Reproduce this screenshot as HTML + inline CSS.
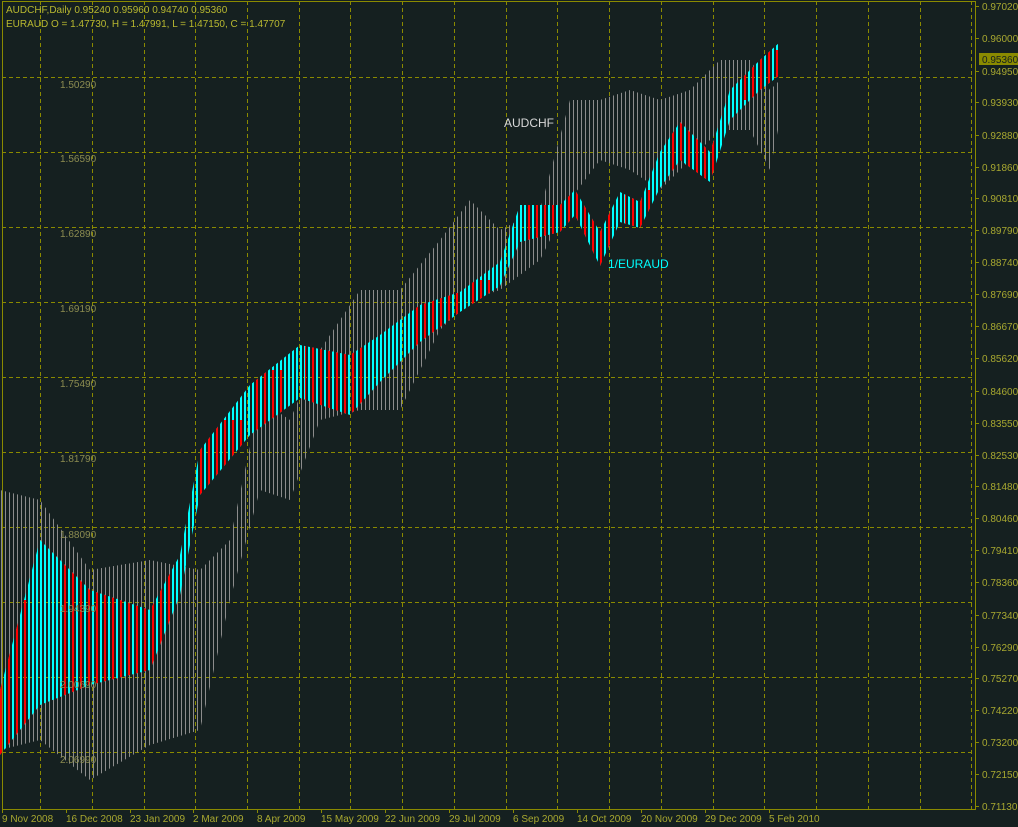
<!DOCTYPE html>
<html><head><meta charset="utf-8"><style>
html,body{margin:0;padding:0;background:#152020;}
svg{display:block;font-family:"Liberation Sans",sans-serif;}
</style></head><body>
<svg width="1018" height="827" viewBox="0 0 1018 827" xmlns="http://www.w3.org/2000/svg">
<defs>
<pattern id="pg" width="4" height="10" patternUnits="userSpaceOnUse"><rect x="1" y="0" width="1" height="10" fill="#8c8c8c"/></pattern>
<pattern id="pc" width="4" height="10" patternUnits="userSpaceOnUse"><rect x="0" y="0" width="2" height="10" fill="#00ffff"/></pattern>
<pattern id="pr" width="8" height="10" patternUnits="userSpaceOnUse"><rect x="0" y="0" width="2" height="10" fill="#ff0000"/></pattern>
<clipPath id="cc"><polygon points="0,690 40,540 90,590 150,610 180,555 200,450 250,385 300,345 350,355 380,335 420,305 460,292 500,262 520,205 560,205 575,190 600,232 620,192 640,202 660,152 680,122 710,152 730,90 760,60 780,42 780,75 760,90 730,120 710,182 680,160 660,188 640,228 620,222 600,266 575,215 560,232 520,242 500,286 460,312 420,342 380,382 350,415 300,398 250,435 200,495 180,595 150,670 90,685 40,705 0,755"/></clipPath>
</defs>
<rect width="1018" height="827" fill="#152020"/>
<g stroke="#8a8a00" stroke-width="1" stroke-dasharray="4,3" fill="none">
<path d="M2 77.5H975M2 152.5H975M2 227.5H975M2 302.5H975M2 377.5H975M2 452.5H975M2 527.5H975M2 602.5H975M2 677.5H975M2 752.5H975"/>
<path d="M40.5 1V809M92.5 1V809M144.5 1V809M195.5 1V809M247.5 1V809M299.5 1V809M350.5 1V809M402.5 1V809M454.5 1V809M506.5 1V809M557.5 1V809M609.5 1V809M661.5 1V809M713.5 1V809M764.5 1V809M816.5 1V809M868.5 1V809M920.5 1V809M971.5 1V809"/>
</g>
<polygon fill="url(#pg)" points="0,490 40,500 90,570 150,560 200,570 230,540 260,400 290,420 320,350 360,290 400,290 440,240 470,200 500,230 540,210 570,100 600,100 630,90 660,100 690,90 720,60 750,60 770,90 780,80 780,120 770,170 750,130 720,130 690,160 660,190 630,170 600,160 570,200 540,260 500,290 470,300 440,330 400,410 360,410 320,420 290,500 260,490 230,600 200,730 150,745 90,780 40,740 0,750"/>
<rect x="0" y="0" width="790" height="800" fill="url(#pc)" clip-path="url(#cc)"/>
<g clip-path="url(#cc)" fill="url(#pr)">
<rect x="0" y="600" width="30" height="200"/><rect x="60" y="550" width="110" height="200"/><rect x="195" y="420" width="50" height="100"/><rect x="255" y="370" width="30" height="80"/><rect x="305" y="330" width="60" height="100"/><rect x="410" y="290" width="50" height="60"/><rect x="470" y="280" width="25" height="40"/><rect x="525" y="190" width="60" height="60"/><rect x="585" y="200" width="30" height="80"/><rect x="625" y="190" width="25" height="50"/><rect x="670" y="120" width="50" height="70"/><rect x="740" y="50" width="40" height="50"/>
</g>
<text x="504" y="127" fill="#d8d8d8" font-size="12">AUDCHF</text>
<text x="608" y="268" fill="#00ffff" font-size="12">1/EURAUD</text>
<g fill="#8c8c50" font-size="10">
<text x="60" y="88">1.50290</text><text x="60" y="162">1.56590</text><text x="60" y="237">1.62890</text><text x="60" y="312">1.69190</text><text x="60" y="387">1.75490</text><text x="60" y="462">1.81790</text><text x="60" y="538">1.88090</text><text x="60" y="612">1.94390</text><text x="60" y="688">2.00690</text><text x="60" y="763">2.06990</text>
</g>
<g fill="#b8b830" font-size="10">
<text x="6" y="13">AUDCHF,Daily  0.95240 0.95960 0.94740 0.95360</text>
<text x="6" y="27">EURAUD O = 1.47730, H = 1.47991, L = 1.47150, C = 1.47707</text>
</g>
<rect x="2.5" y="1.5" width="973" height="808" fill="none" stroke="#8a8a00"/>
<g fill="#a8a830" font-size="10">
<text x="982" y="10">0.97020</text><text x="982" y="42">0.96000</text><text x="982" y="75">0.94950</text><text x="982" y="106">0.93930</text><text x="982" y="139">0.92880</text><text x="982" y="171">0.91860</text><text x="982" y="202">0.90810</text><text x="982" y="234">0.89790</text><text x="982" y="266">0.88740</text><text x="982" y="298">0.87690</text><text x="982" y="330">0.86670</text><text x="982" y="362">0.85620</text><text x="982" y="395">0.84600</text><text x="982" y="427">0.83550</text><text x="982" y="459">0.82530</text><text x="982" y="490">0.81480</text><text x="982" y="522">0.80460</text><text x="982" y="554">0.79410</text><text x="982" y="586">0.78360</text><text x="982" y="619">0.77340</text><text x="982" y="651">0.76290</text><text x="982" y="682">0.75270</text><text x="982" y="714">0.74220</text><text x="982" y="746">0.73200</text><text x="982" y="778">0.72150</text><text x="982" y="810">0.71130</text>
</g>
<rect x="979" y="53" width="39" height="12" fill="#8a8a00"/>
<text x="982" y="63" fill="#152020" font-size="10">0.95360</text>
<g stroke="#8a8a00"><path d="M975 6.5h4M975 38.5h4M975 71.5h4M975 102.5h4M975 135.5h4M975 167.5h4M975 198.5h4M975 230.5h4M975 262.5h4M975 294.5h4M975 326.5h4M975 358.5h4M975 391.5h4M975 423.5h4M975 455.5h4M975 486.5h4M975 518.5h4M975 550.5h4M975 582.5h4M975 615.5h4M975 647.5h4M975 678.5h4M975 710.5h4M975 742.5h4M975 774.5h4M975 806.5h4"/>
<path d="M2.5 809v4M66.5 809v4M130.5 809v4M193.5 809v4M257.5 809v4M321.5 809v4M385.5 809v4M449.5 809v4M513.5 809v4M577.5 809v4M641.5 809v4M705.5 809v4M769.5 809v4"/></g>
<g fill="#a8a830" font-size="10">
<text x="2" y="822">9 Nov 2008</text><text x="66" y="822">16 Dec 2008</text><text x="130" y="822">23 Jan 2009</text><text x="193" y="822">2 Mar 2009</text><text x="257" y="822">8 Apr 2009</text><text x="321" y="822">15 May 2009</text><text x="385" y="822">22 Jun 2009</text><text x="449" y="822">29 Jul 2009</text><text x="513" y="822">6 Sep 2009</text><text x="577" y="822">14 Oct 2009</text><text x="641" y="822">20 Nov 2009</text><text x="705" y="822">29 Dec 2009</text><text x="769" y="822">5 Feb 2010</text>
</g>
</svg>
</body></html>
